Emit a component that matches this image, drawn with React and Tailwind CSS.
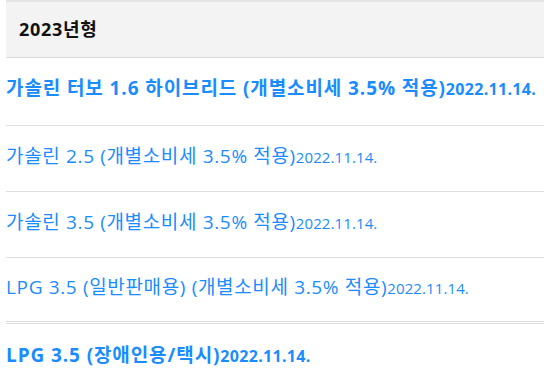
export default function App() {
  const rows = [
    { name: "가솔린 터보 1.6 하이브리드 (개별소비세 3.5% 적용)", date: "2022.11.14.", bold: true },
    { name: "가솔린 2.5 (개별소비세 3.5% 적용)", date: "2022.11.14." },
    { name: "가솔린 3.5 (개별소비세 3.5% 적용)", date: "2022.11.14." },
    { name: "LPG 3.5 (일반판매용) (개별소비세 3.5% 적용)", date: "2022.11.14." },
    { name: "LPG 3.5 (장애인용/택시)", date: "2022.11.14.", bold: true },
  ]

  return (
    <div className="w-[544px] h-[390px] overflow-hidden bg-white pl-[6px] font-['Open_Sans','Noto_Sans_CJK_KR',sans-serif]">
      <div className="border-t-2 border-[#e4e4e4] border-b border-b-[#dcdcdc] bg-[#f3f3f3] h-[58px] flex items-center pl-[13px]">
        <h2 className="text-[18px] font-bold text-[#111] tracking-[0.7px]">2023년형</h2>
      </div>
      {rows.map((r, i) => (
        <div
          key={i}
          className={`flex items-center text-[#1a8cff] ${i === 0 ? "h-[68px] pb-[6px]" : "h-[66px] pb-[4px]"} ${i === 3 ? "border-b-[3px] border-double border-[#dedede]" : i < 4 ? "border-b border-[#dedede]" : ""}`}
        >
          {r.bold ? (
            <span className="whitespace-nowrap text-[19px] font-bold tracking-[0.9px]">
              {r.name}
              <span className="text-[16px] tracking-[0.3px]">{r.date}</span>
            </span>
          ) : (
            <span className="whitespace-nowrap text-[19px] tracking-[0.65px]">
              {r.name}
              <span className="text-[15px] tracking-[0.1px]">{r.date}</span>
            </span>
          )}
        </div>
      ))}
    </div>
  )
}
